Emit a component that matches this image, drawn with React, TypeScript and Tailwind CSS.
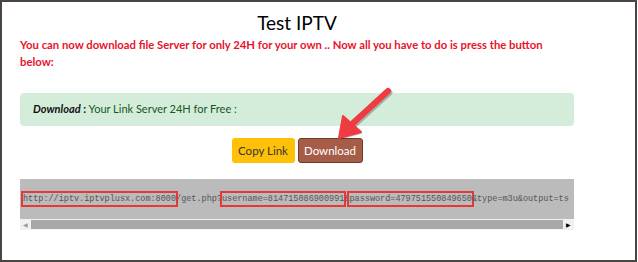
export default function App() {
  const url1 = "http://iptv.iptvplusx.com:8000";
  const user = "username=814715086900991";
  const pass = "password=479751550849650";

  return (
    <div className="relative w-[638px] h-[262px] bg-white">
      <div className="w-[637px] h-[262px] border-2 border-[#4b4444] bg-white font-['Lato',sans-serif]">
        <div className="ml-[18px] w-[554px]">
          {/* Title */}
          <h1 className="pt-[9px] text-center text-[19px] leading-[24px] text-black">Test IPTV</h1>

          <p className="mt-[1px] text-[11.3px] leading-[17px] font-bold text-[#e8132b] whitespace-nowrap">
            You can now download file Server for only 24H for your own .. Now all you have to do is press the button
            <br />
            below:
          </p>

          {/* Alert */}
          <div className="mt-[23px] h-[33px] flex items-center rounded-[4px] bg-[#d4edda] pl-[13px] text-[11px]">
            <span className="font-bold italic text-[#111]">Download</span>
            <span className="font-bold text-[#111]">&nbsp;: </span>
            <span className="text-[#155724]">&nbsp;Your Link Server 24H for Free :</span>
          </div>

          {/* Buttons */}
          <div className="mt-[12px] flex justify-center gap-[3px]">
            <button className="w-[63px] h-[25px] rounded-[3px] bg-[#ffc107] text-[11.5px] text-[#333]">
              Copy Link
            </button>
            <button className="w-[65px] h-[25px] rounded-[3px] border border-[#6e3a2a] bg-[#a65d47] text-[11.5px] text-white">
              Download
            </button>
          </div>

          {/* Link box */}
          <div className="mt-[16px] h-[40px] bg-[#bbbbbb] flex items-center pl-[3px] overflow-hidden whitespace-nowrap font-['Liberation_Mono',monospace] text-[8.5px] text-[#555]">
            <span className="inline-block leading-[12px] outline-2 outline-solid outline-[#e53935]">{url1}</span>
            <span>/get.php?</span>
            <span className="inline-block leading-[12px] outline-2 outline-solid outline-[#e53935]">{user}</span>
            <span>&amp;</span>
            <span className="inline-block leading-[12px] outline-2 outline-solid outline-[#e53935]">{pass}</span>
            <span>&amp;type=m3u&amp;output=ts</span>
          </div>

          {/* Scrollbar */}
          <div className="h-[11px] flex bg-[#f1f1f1]">
            <div className="w-[11px] flex items-center justify-center text-[6px] text-[#999]">◀</div>
            <div className="flex-1 my-[1px] bg-[#a8a8a8]" />
            <div className="w-[11px] flex items-center justify-center text-[6px] text-black">▶</div>
          </div>
        </div>
      </div>

      {/* Red arrow */}
      <svg className="absolute left-0 top-0 pointer-events-none" width="638" height="262" viewBox="0 0 638 262">
        <g opacity="0.25" transform="translate(1.5,1.5)">
          <line x1="388" y1="91" x2="352" y2="124" stroke="#000" strokeWidth="6" strokeLinecap="round" />
          <polygon points="339,138 343,116 361,132" fill="#000" />
        </g>
        <line x1="388" y1="91" x2="352" y2="124" stroke="#ef3b41" strokeWidth="6" strokeLinecap="round" />
        <polygon points="339,138 343,116 361,132" fill="#ef3b41" stroke="#ef3b41" strokeWidth="2" strokeLinejoin="round" />
      </svg>
    </div>
  );
}
